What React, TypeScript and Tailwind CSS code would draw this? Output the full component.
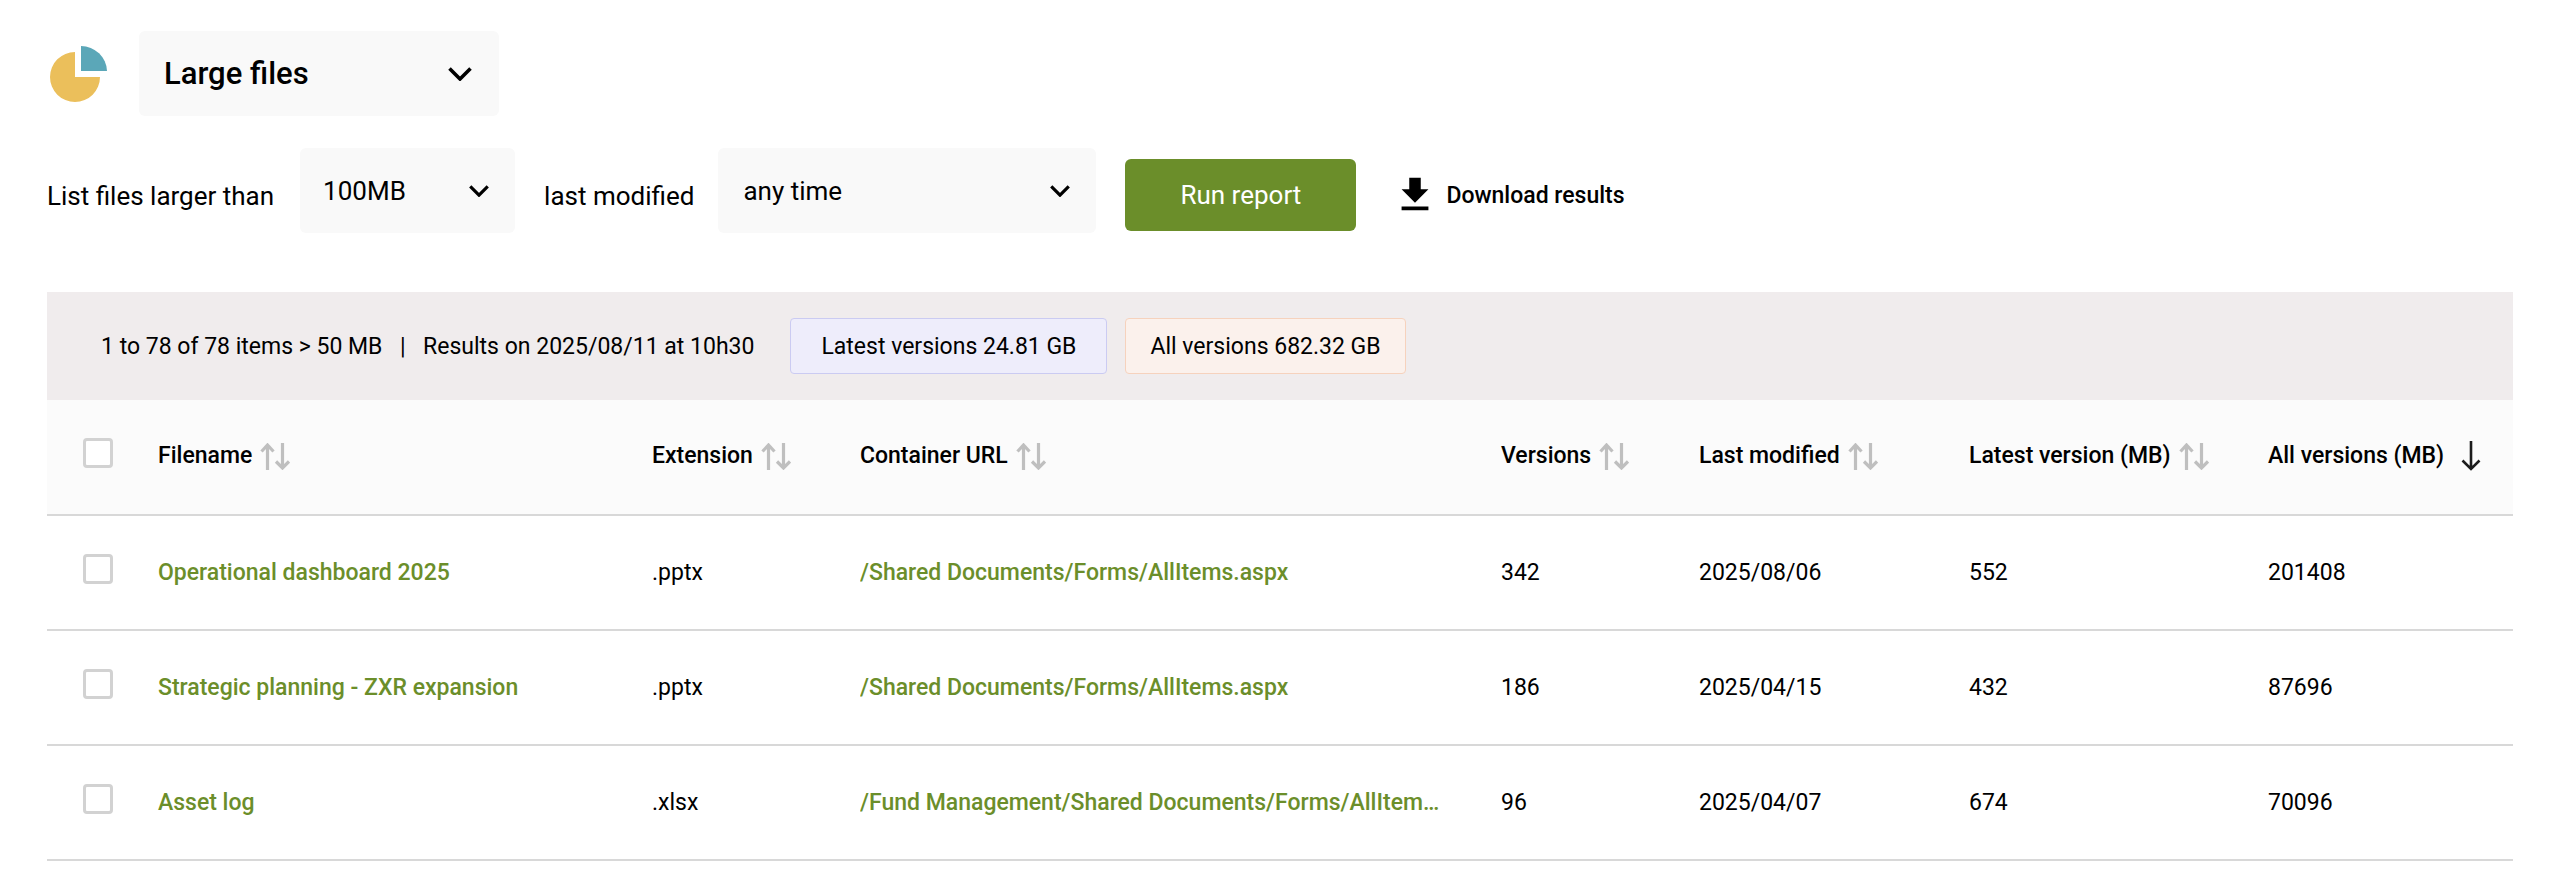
import { ReactNode } from "react"

const rows = [
  { name: "Operational dashboard 2025", ext: ".pptx", url: "/Shared Documents/Forms/AllItems.aspx", versions: "342", modified: "2025/08/06", latest: "552", all: "201408" },
  { name: "Strategic planning - ZXR expansion", ext: ".pptx", url: "/Shared Documents/Forms/AllItems.aspx", versions: "186", modified: "2025/04/15", latest: "432", all: "87696" },
  { name: "Asset log", ext: ".xlsx", url: "/Fund Management/Shared Documents/Forms/AllItems.aspx", versions: "96", modified: "2025/04/07", latest: "674", all: "70096" },
]

function Chevron({ small }: { small?: boolean }) {
  return (
    <svg viewBox="0 0 24 14" className={small ? "w-[20px] h-[12px]" : "w-[24px] h-[14px]"} fill="none" stroke="black" strokeWidth={small ? 3.8 : 3.6}>
      <path d="M1.5 1.5 L12 12 L22.5 1.5" />
    </svg>
  )
}

function SortArrows() {
  return (
    <svg viewBox="0 0 30 27" className="w-[30px] h-[27px] ml-[8px] shrink-0" fill="none" stroke="#bfbfbf" strokeWidth="3.2">
      <path d="M7.5 27 V2 M1.5 8.5 L7.5 2 L13.5 8.5" />
      <path d="M22.5 0 V25 M16 18.5 L22.5 25 L29 18.5" />
    </svg>
  )
}

function Checkbox() {
  return <span className="block w-[30px] h-[30px] rounded-[4px] border-[3px] border-[#d2d2d2] bg-white" />
}

function Th({ children, sorted }: { children: ReactNode; sorted?: boolean }) {
  return (
    <th className="p-0 pb-[2px] text-left font-medium">
      <div className="flex items-center">
        <span>{children}</span>
        {sorted ? (
          <svg viewBox="0 0 20 30" className="w-[20px] h-[30px] ml-[17px] shrink-0" fill="none" stroke="#1c1c1c" strokeWidth="2.6">
            <path d="M10 0 V28 M1.5 19.5 L10 28 L18.5 19.5" />
          </svg>
        ) : (
          <SortArrows />
        )}
      </div>
    </th>
  )
}

export default function App() {
  return (
    <div className="min-h-screen bg-white text-black pl-[47px] pr-[42px] pt-[31px] font-['Roboto',sans-serif] text-[26px]">
      <div className="flex items-center">
        <svg viewBox="0 0 57 56" className="w-[57px] h-[56px] ml-[3px] shrink-0">
          <path d="M25 6 V31 H50 A25 25 0 1 1 25 6 Z" fill="#ebbf5b" />
          <path d="M31 0 A26 26 0 0 1 57 25 H31 Z" fill="#5ba7b8" />
        </svg>
        <div className="ml-[32px] w-[360px] h-[85px] rounded-[6px] bg-[#f9f9f9] flex items-center justify-between pl-[25px] pr-[27px]">
          <span className="text-[31px] font-medium pt-[2px]">Large files</span>
          <Chevron />
        </div>
      </div>

      <div className="mt-[32px] flex items-center">
        <span className="pt-[2px]">List files larger than</span>
        <div className="ml-[26px] mb-[9px] w-[215px] h-[85px] rounded-[6px] bg-[#f9f9f9] flex items-center justify-between pl-[23px] pr-[26px]">
          <span className="pt-[2px]">100MB</span>
          <Chevron small />
        </div>
        <span className="ml-[29px] pt-[2px]">last modified</span>
        <div className="ml-[24px] mb-[9px] w-[378px] h-[85px] rounded-[6px] bg-[#f9f9f9] flex items-center justify-between pl-[25px] pr-[26px]">
          <span className="pt-[2px]">any time</span>
          <Chevron small />
        </div>
        <button className="ml-[29px] w-[231px] h-[72px] rounded-[6px] bg-[#6b8e2a] text-white text-[26px] pt-[1px]">Run report</button>
        <svg viewBox="0 0 24 24" className="ml-[36px] w-[46px] h-[46px] shrink-0">
          <path d="M19 9h-4V3H9v6H5l7 7 7-7zM5 18v2h14v-2H5z" fill="black" />
        </svg>
        <span className="ml-[8px] text-[23px] font-medium pt-[2px]">Download results</span>
      </div>

      <div className="mt-[50px] h-[108px] bg-[#f0eced] flex items-center pl-[54px] text-[23px]">
        <span className="pt-[2px]">1 to 78 of 78 items &gt; 50 MB</span>
        <span className="mx-[17.5px] pt-[2px]">|</span>
        <span className="pt-[2px]">Results on 2025/08/11 at 10h30</span>
        <span className="ml-[36px] h-[56px] flex items-center pt-[2px] px-[30px] rounded-[4px] border border-[#cbcbf2] bg-[#eeedfb]">Latest versions 24.81 GB</span>
        <span className="ml-[18px] h-[56px] flex items-center pt-[2px] px-[24px] rounded-[4px] border border-[#f6d2bd] bg-[#fbf1ec]">All versions 682.32 GB</span>
      </div>

      <table className="w-full table-fixed border-collapse text-[23px]">
        <colgroup>
          <col className="w-[111px]" />
          <col className="w-[494px]" />
          <col className="w-[208px]" />
          <col className="w-[641px]" />
          <col className="w-[198px]" />
          <col className="w-[270px]" />
          <col className="w-[299px]" />
          <col className="w-[245px]" />
        </colgroup>
        <thead>
          <tr className="h-[115px] bg-[#fbfbfb] border-b-2 border-[#d8d8d8]">
            <th className="p-0 pl-[36px] pb-[8px]"><Checkbox /></th>
            <Th>Filename</Th>
            <Th>Extension</Th>
            <Th>Container URL</Th>
            <Th>Versions</Th>
            <Th>Last modified</Th>
            <Th>Latest version (MB)</Th>
            <Th sorted>All versions (MB)</Th>
          </tr>
        </thead>
        <tbody>
          {rows.map((r) => (
            <tr key={r.name} className="h-[115px] border-b-2 border-[#d8d8d8]">
              <td className="p-0 pl-[36px] pb-[8px]"><Checkbox /></td>
              <td className="p-0 pt-[2px] text-[#6b8e2a] font-medium">{r.name}</td>
              <td className="p-0 pt-[2px]">{r.ext}</td>
              <td className="p-0 pt-[2px] text-[#6b8e2a] font-medium">
                <span className="block w-[581px] truncate">{r.url}</span>
              </td>
              <td className="p-0 pt-[2px]">{r.versions}</td>
              <td className="p-0 pt-[2px]">{r.modified}</td>
              <td className="p-0 pt-[2px]">{r.latest}</td>
              <td className="p-0 pt-[2px]">{r.all}</td>
            </tr>
          ))}
        </tbody>
      </table>
    </div>
  )
}
